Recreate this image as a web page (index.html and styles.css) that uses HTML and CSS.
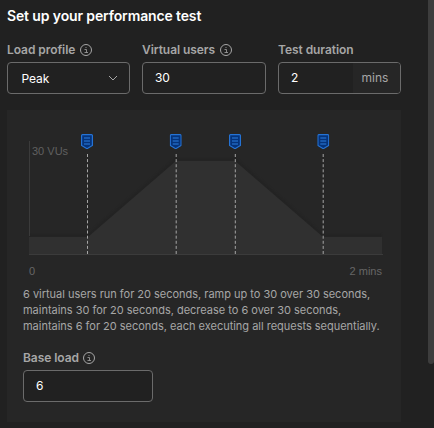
FILE: index.html
```html
<!DOCTYPE html>
<html lang="en">
<head>
<meta charset="utf-8">
<title>Performance test</title>
<link rel="stylesheet" href="styles.css">
</head>
<body>
<svg class="defs" aria-hidden="true">
  <symbol id="info" viewBox="0 0 12 12">
    <circle cx="6" cy="6" r="5.5" fill="none" stroke="currentColor"/>
    <path d="M4.5 5.5H6.5V8.5M4.5 8.5H8M5.5 3.5H6.5" fill="none" stroke="currentColor" stroke-width=".8"/>
  </symbol>
  <symbol id="flag" viewBox="0 0 12 15">
    <path d="M1.5.6h9q.9 0 .9.9v9.9L6 14.7.6 11.4V1.5q0-.9.9-.9z" fill="#05337a" stroke="#2573d5" stroke-width="1.2"/>
    <path d="M3 4h6M3 7h6M3 10h6" stroke="#1f65bd" stroke-width="1.7"/>
  </symbol>
</svg>
<main class="setup">
  <h1 class="title">Set up your performance test</h1>
  <div class="fields">
    <div class="field">
      <div class="label">Load profile <svg class="info"><use href="#info"/></svg></div>
      <div class="input select"><span>Peak</span>
        <svg class="chevron" viewBox="0 0 10 6"><path d="M1 1l4 4 4-4" fill="none" stroke="currentColor"/></svg>
      </div>
    </div>
    <div class="field">
      <div class="label">Virtual users <svg class="info"><use href="#info"/></svg></div>
      <div class="input">30</div>
    </div>
    <div class="field">
      <div class="label">Test duration</div>
      <div class="input"><span>2</span><span class="unit">mins</span></div>
    </div>
  </div>
  <section class="panel">
    <svg class="chart" viewBox="0 0 354 130">
      <defs>
        <filter id="soft" x="-5%" y="-10%" width="110%" height="120%" color-interpolation-filters="sRGB"><feGaussianBlur stdDeviation=".8"/></filter>
      </defs>
      <path d="M0 110H59L147 34H206L294 110H353" transform="translate(0 -.5)" fill="none" stroke="#212121" stroke-width="1.6" filter="url(#soft)"/>
      <path d="M0 111H59L147 35H206L294 111H353V129H0z" fill="#303030"/>
      <path d="M.5 15V110" stroke="#3b3b3b"/>
      <path d="M0 128.5H354" stroke="#3b3b3b"/>
      <g stroke="#a6a6a6" stroke-dasharray="3 2.105">
        <path d="M58.5 28V128"/><path d="M147.2 28V128"/><path d="M206.3 28V128"/><path d="M294.2 28V128"/>
      </g>
      <text class="axis-text" x="3" y="29">30 VUs</text>
      <use href="#flag" x="52" y="8" width="12" height="15"/>
      <use href="#flag" x="140.7" y="8" width="12" height="15"/>
      <use href="#flag" x="200" y="8" width="12" height="15"/>
      <use href="#flag" x="288.3" y="8" width="12" height="15"/>
    </svg>
    <div class="axis"><span>0</span><span>2 mins</span></div>
    <p class="summary">6 virtual users run for 20 seconds, ramp up to 30 over 30 seconds, maintains 30 for 20 seconds, decrease to 6 over 30 seconds, maintains 6 for 20 seconds, each executing all requests sequentially.</p>
    <div class="field base">
      <div class="label">Base load <svg class="info"><use href="#info"/></svg></div>
      <div class="input">6</div>
    </div>
  </section>
</main>
<div class="scrollbar"></div>
</body>
</html>
```
FILE: styles.css
```css
* { box-sizing: border-box; }
body {
  margin: 0;
  height: 428px;
  overflow: hidden;
  display: flex;
  justify-content: space-between;
  background: #212121;
  color: #fff;
  font: 12px/16px Inter, sans-serif;
}
.defs { position: absolute; width: 0; height: 0; }
.setup { width: 401px; padding: 6px 0 0 7px; }
.title { margin: 0; font-size: 14px; line-height: 20px; font-weight: 600; letter-spacing: -.13px; }
.fields { display: grid; grid-template-columns: 123px 124px 123px; gap: 12px; margin-top: 16px; }
.label {
  display: flex;
  align-items: center;
  gap: 4.5px;
  height: 16px;
  margin-bottom: 4px;
  color: #a6a6a6;
  font-weight: 600;
  letter-spacing: -.06px;
}
.info { width: 12px; height: 12px; }
.input {
  display: flex;
  align-items: center;
  justify-content: space-between;
  height: 32px;
  padding-left: 12px;
  border: 1px solid #6b6b6b;
  border-radius: 4px;
  background: #212121;
  overflow: hidden;
  letter-spacing: -.1px;
}
.select { padding: 2px 11px 0 13.5px; }
.chevron { width: 10px; height: 6px; margin-top: -2px; color: #a6a6a6; }
.unit {
  display: flex;
  align-items: center;
  justify-content: center;
  width: 47px;
  height: 30px;
  padding-right: 3px;
  background: #262626;
  color: #a6a6a6;
  letter-spacing: 0;
}
.panel { height: 312px; margin-top: 16px; padding: 16px; background: #262626; }
.chart { display: block; width: 354px; height: 130px; margin-left: 6px; }
.axis-text { font: 11px "Liberation Sans", sans-serif; fill: #606060; }
.axis {
  display: flex;
  justify-content: space-between;
  margin: 7px 3px 0 6px;
  color: #666;
  font-family: "Liberation Sans", sans-serif;
  font-size: 11px;
}
.summary { margin: 7px 0 0; color: #a6a6a6; font-size: 11px; line-height: 16px; letter-spacing: -.015px; }
.base { width: 130px; margin-top: 16px; }
.scrollbar { width: 6px; height: 364px; background: #3d3d3d; border-radius: 0 0 3px 3px; }
```
